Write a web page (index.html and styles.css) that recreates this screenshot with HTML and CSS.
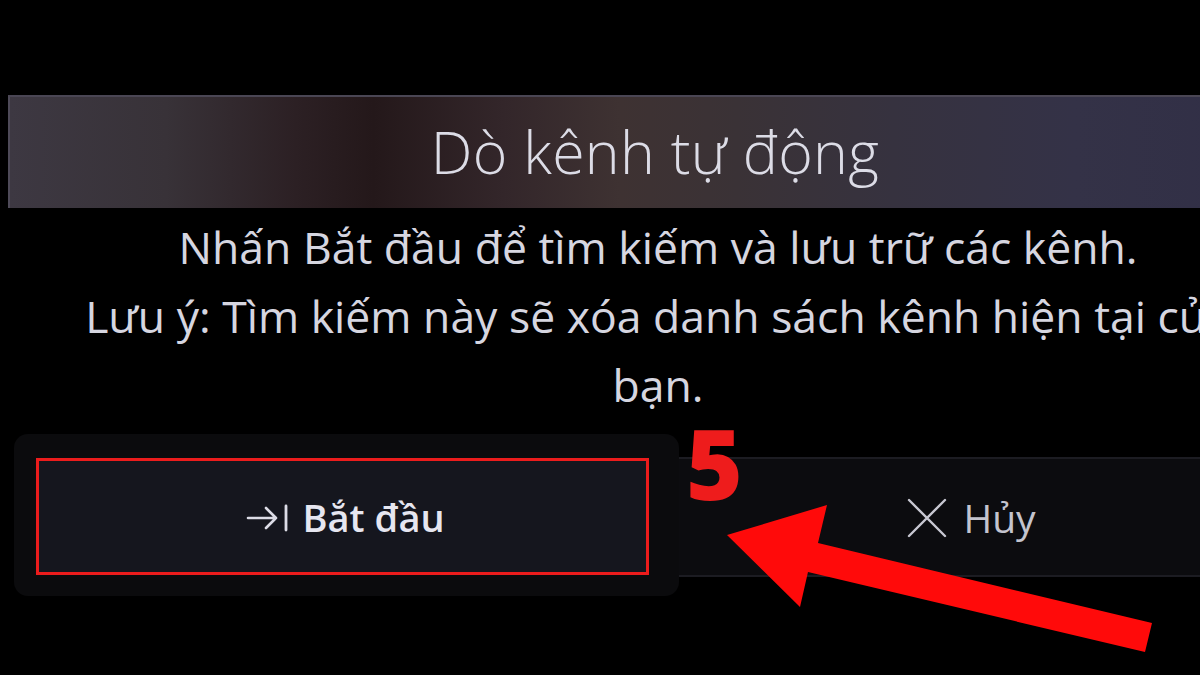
FILE: index.html
```html
<!DOCTYPE html>
<html lang="vi">
<head>
<meta charset="utf-8">
<title>Dò kênh tự động</title>
<link rel="stylesheet" href="styles.css">
</head>
<body>
<div class="screen">
  <div class="dialog">
    <div class="title-bar"><h1 class="title">Dò kênh tự động</h1></div>
    <div class="message">
      <p class="line">Nhấn Bắt đầu để tìm kiếm và lưu trữ các kênh.</p>
      <p class="line">Lưu ý: Tìm kiếm này sẽ xóa danh sách kênh hiện tại của<br>bạn.</p>
    </div>
    <div class="buttons">
      <div class="focus-wrap">
        <div class="btn btn-start">
          <svg class="ico-start" viewBox="0 0 44 28" width="44" height="28" aria-hidden="true">
            <path d="M2 14 H30 M20 4 L30 14 L20 24" fill="none" stroke="#dcdce6" stroke-width="2.6" stroke-linecap="round" stroke-linejoin="round"/>
            <path d="M40 2 V26" fill="none" stroke="#dcdce6" stroke-width="2.8" stroke-linecap="round"/>
          </svg>
          <span>Bắt đầu</span>
        </div>
      </div>
      <div class="btn btn-cancel">
        <svg class="ico-x" viewBox="0 0 40 40" width="40" height="40" aria-hidden="true">
          <path d="M2 2 L38 38 M38 2 L2 38" fill="none" stroke="#c8c8d2" stroke-width="2.4" stroke-linecap="round"/>
        </svg>
        <span>Hủy</span>
      </div>
    </div>
  </div>
  <div class="step">5</div>
  <svg class="arrow" viewBox="0 0 1200 675" width="1200" height="675" aria-hidden="true">
    <polygon points="727,535 827,505 818,543 1152,623 1145,652 808,572 800,607" fill="#ff0a0a"/>
  </svg>
</div>
</body>
</html>
```
FILE: styles.css
```css
html, body {
  margin: 0;
  padding: 0;
  background: #000;
}
body {
  width: 1200px;
  height: 675px;
  overflow: hidden;
  font-family: "Open Sans", "Noto Sans", "DejaVu Sans", sans-serif;
}
.screen {
  position: relative;
  width: 1200px;
  height: 675px;
  overflow: hidden;
  background: #000;
}
.dialog {
  width: 1300px;
  margin-left: 8px;
  padding-top: 95px;
}
.title-bar {
  height: 113px;
  display: flex;
  align-items: center;
  justify-content: center;
  box-sizing: border-box;
  border-top: 2px solid #4a4654;
  border-left: 2px solid #4e4a58;
  background: linear-gradient(90deg, #3d3842 0%, #383238 12%, #2c2024 22%, #24181a 28%, #33262a 38%, #3e3232 47%, #3a3236 56%, #36323f 68%, #343247 82%, #302e46 100%);
}
.title {
  margin: 0 8px 0 0;
  font-size: 59px;
  font-weight: 300;
  color: #dcdce6;
  letter-spacing: 0.3px;
  padding-bottom: 4px;
}
.message {
  padding: 4px 20px 0;
  text-align: center;
  color: #d6d6e0;
  font-size: 44.5px;
  line-height: 69px;
  height: 224px;
  box-sizing: border-box;
  white-space: nowrap;
}
.line {
  margin: 0;
}
.buttons {
  display: flex;
  align-items: flex-start;
  height: 170px;
}
.focus-wrap {
  width: 665px;
  height: 162px;
  margin-left: 6px;
  margin-top: 2px;
  box-sizing: border-box;
  padding: 24px 30px 0 22px;
  background: #0b0b0d;
  border-radius: 14px;
}
.btn {
  display: flex;
  align-items: center;
  justify-content: center;
  gap: 12px;
}
.btn-start {
  height: 117px;
  box-sizing: border-box;
  border: 3px solid #ec1c1c;
  background: #15161e;
  color: #e6e6f0;
  font-size: 38px;
  font-weight: 600;
  padding-left: 6px;
}
.ico-start {
  margin-top: 2px;
}
.step {
  position: absolute;
  left: 686px;
  top: 414px;
  color: #ee1c1c;
  font-family: "Open Sans", "Liberation Sans", sans-serif;
  font-size: 97px;
  font-weight: 800;
  line-height: 1;
}
.btn-cancel {
  flex: 1;
  height: 120px;
  margin-top: 25px;
  box-sizing: border-box;
  border-top: 2px solid #1c1c22;
  border-bottom: 2px solid #1c1c22;
  background: #0c0c0f;
  color: #c4c4ce;
  font-size: 39px;
  gap: 16px;
  padding-right: 44px;
}
.ico-x {
  margin-top: 2px;
}
.arrow {
  position: absolute;
  left: 0;
  top: 0;
  pointer-events: none;
}
```
